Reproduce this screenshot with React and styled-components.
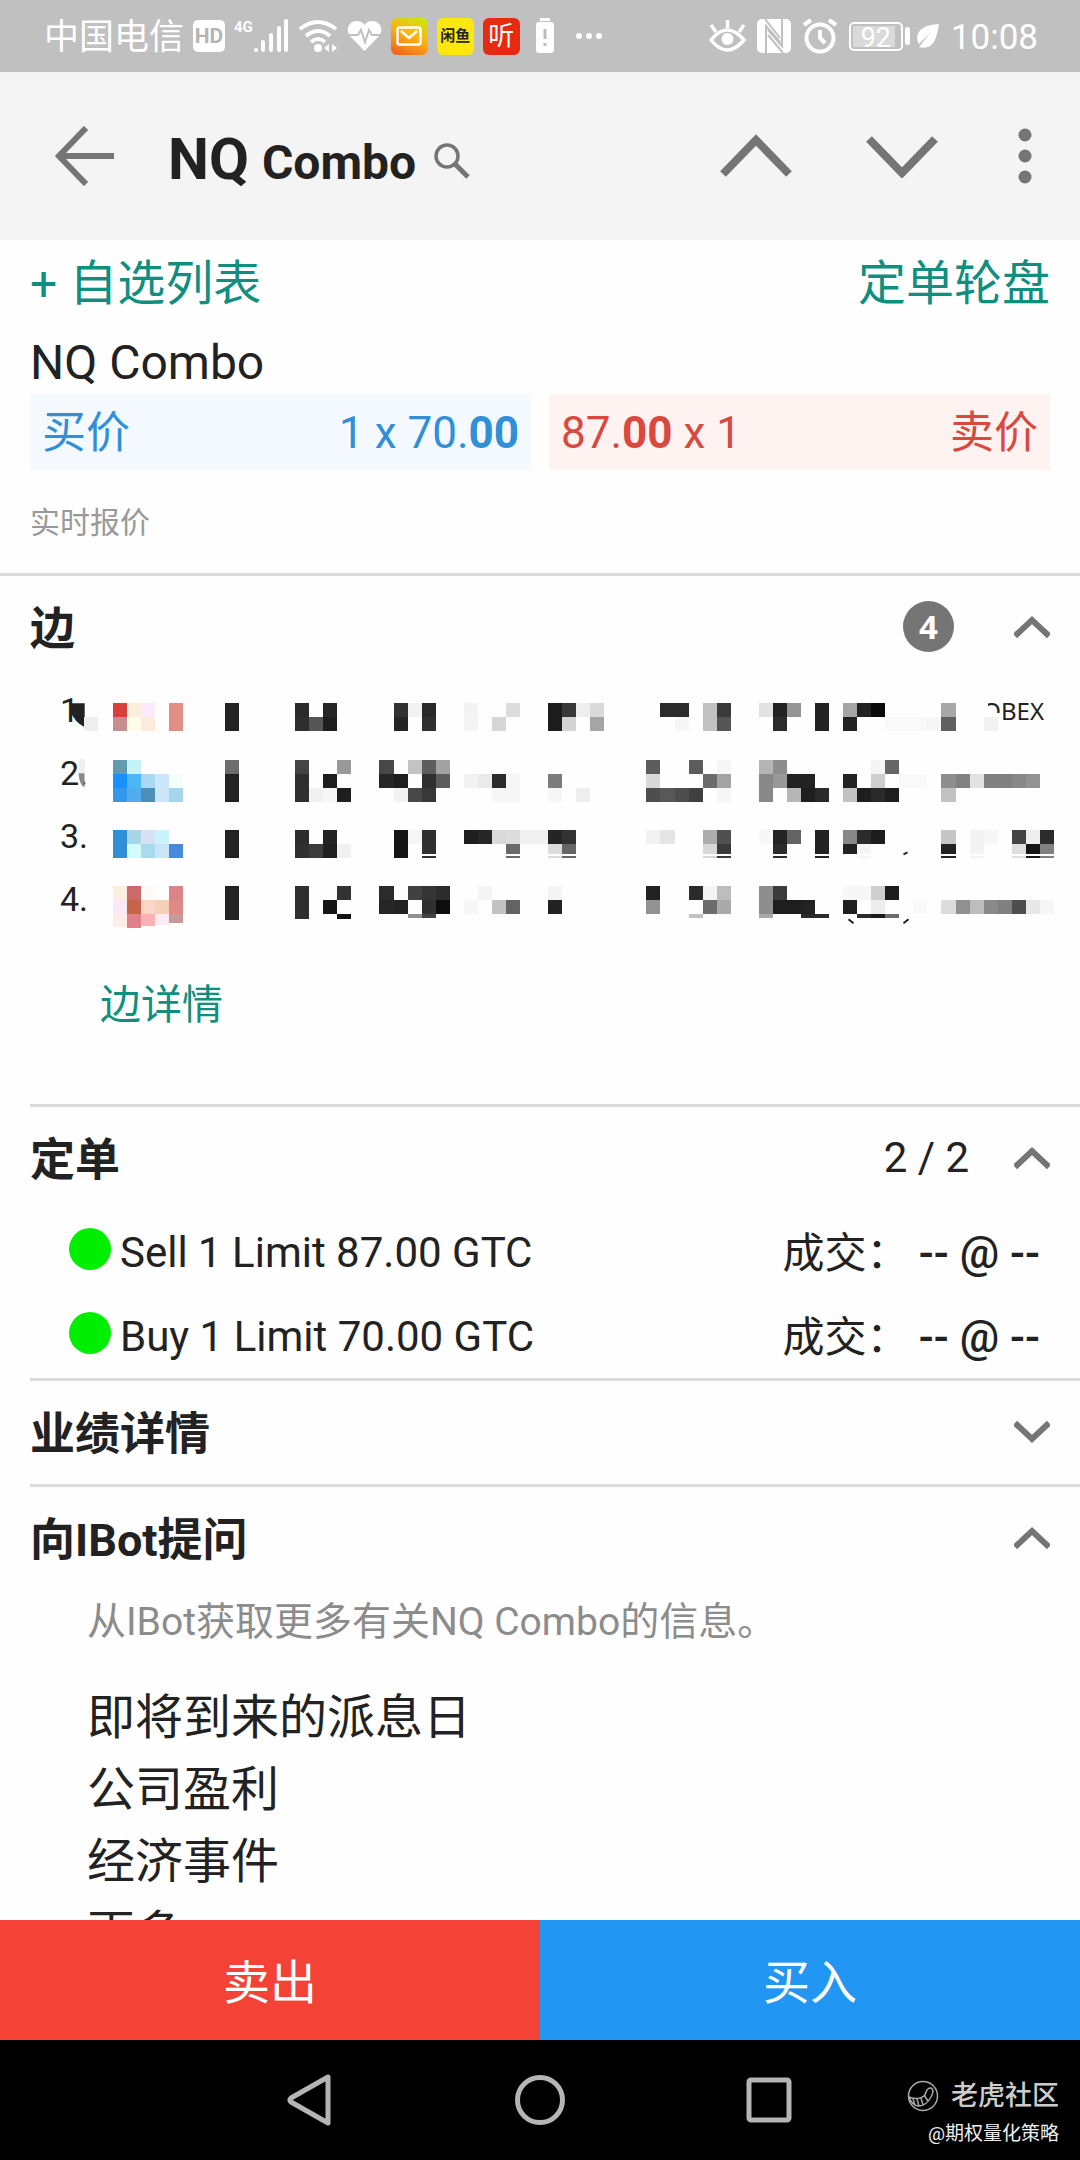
import React, { useState } from 'react';
import styled, { createGlobalStyle } from 'styled-components';

const GlobalStyle = createGlobalStyle`
  * {
    box-sizing: border-box;
  }

  body {
    margin: 0;
    background: #fefefe;
    color: #222;
    font-family: Roboto, 'Noto Sans CJK SC', sans-serif;
  }

  button {
    border: 0;
    padding: 0;
    background: none;
    color: inherit;
    font: inherit;
    cursor: pointer;
  }

  svg {
    display: block;
    flex: none;
  }
`;

const Screen = styled.div`
  display: flex;
  flex-direction: column;
  height: 100vh;
`;

const StatusBar = styled.header`
  display: flex;
  justify-content: space-between;
  align-items: center;
  height: 72px;
  flex: none;
  padding: 0 42px 0 44px;
  background: #c0c0c0;
  color: #fff;
`;

const StatusGroup = styled.div`
  display: flex;
  align-items: center;
  gap: ${({ $gap }) => $gap}px;
`;

const StatusText = styled.span`
  padding-top: 4px;
  font-size: 35px;
  line-height: 40px;
`;

const HdBadge = styled.span`
  width: 32px;
  border-radius: 5px;
  background: #fff;
  color: #b4b4b4;
  font-size: 21px;
  font-weight: bold;
  line-height: 32px;
  text-align: center;
`;

const Signal = styled.span`
  display: flex;
  align-items: flex-start;
  font-size: 15px;
  font-weight: bold;
  line-height: 16px;
`;

const AppBadge = styled.span`
  display: flex;
  align-items: center;
  justify-content: center;
  width: 37px;
  height: 37px;
  border-radius: 6px;
  background: ${({ $bg }) => $bg};
  color: ${({ $color }) => $color};
  font-size: ${({ $size }) => $size}px;
  font-weight: ${({ $weight }) => $weight || 'normal'};
  line-height: 37px;
`;

const Battery = styled.span`
  display: flex;
  align-items: center;
  gap: 2px;

  &::after {
    content: '';
    width: 5px;
    height: 18px;
    border-radius: 3px;
    background: #fff;
  }
`;

const BatteryLevel = styled.span`
  width: 54px;
  height: 29px;
  border: 2px solid #fff;
  border-radius: 5px;
  background: linear-gradient(#dadada, #dadada) 2px 2px / 42px 21px no-repeat;
  font-size: 27px;
  line-height: 28px;
  text-align: center;
`;

const AppBar = styled.div`
  display: flex;
  align-items: center;
  height: 168px;
  flex: none;
  padding: 0 42px 0 54px;
  background: #f4f4f4;
  color: #757575;
`;

const Title = styled.h1`
  display: flex;
  align-items: baseline;
  gap: 13px;
  flex: 1;
  margin: 0 0 0 54px;
  padding-top: 10px;
  color: #222;
  font-size: 58px;
  line-height: 72px;
`;

const TitleSmall = styled.span`
  font-size: 48px;
`;

const SearchIcon = styled.svg`
  margin-left: 4px;
`;

const BarActions = styled.div`
  display: flex;
  align-items: center;
  gap: 74px;
`;

const Content = styled.main`
  flex: 1;
  min-height: 0;
  overflow-y: auto;
  scrollbar-width: none;
`;

const Quote = styled.section`
  padding: 12px 30px 32px;
  border-bottom: 3px solid #dcdcdc;
`;

const LinkRow = styled.div`
  display: flex;
  justify-content: space-between;
`;

const GreenLink = styled.a`
  color: #108e7e;
  font-size: ${({ $size }) => $size || 48}px;
  line-height: 64px;
  text-decoration: none;
`;

const Symbol = styled.div`
  margin-top: 16px;
  font-size: 48px;
  line-height: 62px;
`;

const Prices = styled.div`
  display: grid;
  grid-template-columns: 1fr 1fr;
  gap: 18px;
`;

const PriceBox = styled.div`
  display: flex;
  justify-content: space-between;
  padding: 2px 12px 0;
  background: ${({ $side }) => ($side === 'bid' ? '#f4f9fe' : '#fff3f2')};
  color: ${({ $side }) => ($side === 'bid' ? '#2f8fd8' : '#d9493f')};
  font-size: 44px;
  line-height: 74px;
`;

const QuoteNote = styled.p`
  margin: 35px 0 0;
  color: #999;
  font-size: 30px;
  line-height: 36px;
`;

const Section = styled.section`
  margin-left: ${({ $flush }) => ($flush ? 0 : 30)}px;
  padding-left: ${({ $flush }) => ($flush ? 30 : 0)}px;
  border-top: ${({ $flush }) => ($flush ? 0 : 3)}px solid #dcdcdc;
`;

const SectionHead = styled.button`
  display: flex;
  align-items: center;
  width: 100%;
  height: 103px;
  padding: 0 30px 2px 0;
  text-align: left;
`;

const SectionTitle = styled.span`
  flex: 1;
  padding-top: 6px;
  font-size: 45px;
  font-weight: bold;
  line-height: 60px;
`;

const Count = styled.span`
  margin-right: 45px;
  font-size: 42px;
`;

const CountBadge = styled.span`
  width: 51px;
  margin-right: 60px;
  border-radius: 50%;
  background: #757575;
  color: #fff;
  font-family: 'Noto Sans', sans-serif;
  font-size: 33px;
  font-weight: bold;
  line-height: 51px;
  text-align: center;
`;

const LegList = styled.ol`
  position: relative;
  margin: 0 0 0 -30px;
  padding: 0 36px 0 60px;
  list-style: none;
`;

const Leg = styled.li`
  display: flex;
  justify-content: space-between;
  font-size: 34px;
  line-height: 63px;
`;

const Exchange = styled.span`
  font-family: 'Noto Sans', sans-serif;
  font-size: 24px;
`;

const Mosaic = styled.svg`
  position: absolute;
  left: 0;
  top: 0;
  width: 100%;
  height: 100%;
`;

const LegFooter = styled.div`
  padding: 42px 0 67px 70px;
`;

const OrderRow = styled.div`
  display: flex;
  align-items: center;
  height: 84px;
  padding: 2px 40px 0 39px;
  font-size: 42px;
  line-height: 50px;
`;

const StatusDot = styled.span`
  width: 42px;
  height: 42px;
  margin: 0 9px 8px 0;
  border-radius: 50%;
  background: #00ef00;
`;

const OrderText = styled.span`
  flex: 1;
`;

const Fill = styled.b`
  font-size: 44px;
  font-weight: 500;
`;

const BotBody = styled.div`
  padding-left: 57px;
`;

const BotHint = styled.p`
  margin: 0 0 30px;
  padding-top: 2px;
  color: #8c8c8c;
  font-size: 39px;
  line-height: 60px;
`;

const BotQuestion = styled.button`
  display: block;
  font-size: 48px;
  line-height: 72px;
`;

const TradeBar = styled.div`
  display: grid;
  grid-template-columns: 1fr 1fr;
  flex: none;
`;

const TradeButton = styled.button`
  height: 120px;
  padding-bottom: 4px;
  background: ${({ $side }) => ($side === 'sell' ? '#f44336' : '#2196f3')};
  color: #fff;
  font-size: 47px;
`;

const NavBar = styled.nav`
  position: relative;
  display: flex;
  justify-content: center;
  align-items: center;
  gap: 180px;
  height: 120px;
  flex: none;
  background: #000;
`;

const NavButton = styled.button`
  width: 50px;
`;

const Watermark = styled.div`
  position: absolute;
  right: 21px;
  bottom: 12px;
  display: flex;
  flex-direction: column;
  align-items: flex-end;
  color: #eee;
  font-size: 19px;
  line-height: 28px;
`;

const Community = styled.div`
  display: flex;
  align-items: center;
  gap: 12px;
  color: #ccc;
  font-size: 27px;
  font-weight: 500;
  line-height: 48px;
`;

// censored cells of the leg list: grid row -> [column, shade, height]
const CELL = 14.05;
const CELLS = {
  0: [[0, 'd9403d'], [1, 'fdeedb'], [2, 'fbebfa'], [4, 'e08e86'], [8, '222'], [13, '2a2a2a'], [15, '262626'], [20, '323232'], [21, 'f2f2f2'], [22, '292929'], [25, 'f3f3f3'], [28, 'dcdcdc'], [31, '1c1c1c'], [32, '383838'], [33, 'eee'], [34, 'dadada'], [39, '2b2b2b'], [40, '2b2b2b'], [42, 'c2c2c2'], [43, '3a3a3a'], [46, 'e2e2e2'], [47, '222'], [48, '949494'], [50, '232323'], [52, 'a5a5a5'], [53, '222'], [54, '0a0a0a'], [59, 'a8a8a8']],
  1: [[-2, 'eee'], [0, 'c68e8e'], [1, 'fffce8'], [2, 'fcebd9'], [4, 'e08e86'], [8, '222'], [13, '2e2e2e'], [14, '555'], [15, '1e1e1e'], [20, '252525'], [22, '303030'], [25, 'f4f4f4'], [27, 'd6d6d6'], [31, '1c1c1c'], [32, 'd3d3d3'], [34, 'a5a5a5'], [40, 'f6f6f6'], [42, 'c2c2c2'], [43, '555'], [47, '2c2c2c'], [50, '232323'], [52, '222'], [55, 'f9f9f9'], [56, 'f9f9f9'], [57, 'f9f9f9'], [58, 'f6f6f6'], [59, '606060'], [62, 'f2f2f2']],
  4: [[0, '5f9cad'], [1, 'c4f3fa'], [8, '6d6d6d'], [13, '454545'], [16, '999'], [19, '484848'], [21, 'c3c3c3'], [22, '5d5d5d'], [23, 'a2a2a2'], [38, '5c5c5c'], [41, '5c5c5c'], [43, 'f7f7f7'], [46, 'b5b5b5'], [47, '8e8e8e'], [54, 'f4f4f4'], [55, '666']],
  5: [[0, '1890ff'], [1, '4bb8f3'], [2, 'a9d8f2'], [3, 'c9e6fa'], [4, 'f3feff'], [8, '222'], [13, '2f2f2f'], [15, '1e1e1e'], [19, '262626'], [20, '1e1e1e'], [22, '2f2f2f'], [23, '5c5c5c'], [25, 'f2f2f2'], [26, 'eaeaea'], [27, '2b2b2b'], [28, 'f6f6f6'], [31, '7c7c7c'], [38, 'd9d9d9'], [42, '6b6b6b'], [43, 'a3a3a3'], [46, '888'], [47, '999'], [48, '222'], [49, '222'], [52, '222'], [54, 'cecece'], [56, 'f9f9f9'], [57, 'f9f9f9'], [59, '8e8e8e'], [60, '828282'], [61, 'e2e2e2'], [62, '808080'], [63, '808080'], [64, '888'], [65, '929292']],
  6: [[0, '3299ea'], [1, '50aef0'], [2, '4c90b8'], [3, 'cbe6f7'], [4, 'a4d7ee'], [8, '222'], [13, '2f2f2f'], [14, 'f1f1f1'], [15, 'f6f6f6'], [16, '1e1e1e'], [20, 'f2f2f2'], [21, '484848'], [22, '383838'], [27, 'f6f6f6'], [28, 'f6f6f6'], [31, 'f6f6f6'], [33, 'eee'], [38, '4e4e4e'], [39, '585858'], [40, '4d4d4d'], [41, '404040'], [43, 'f6f6f6'], [46, '888'], [48, 'b7b7b7'], [49, '1e1e1e'], [50, '2a2a2a'], [52, 'c2c2c2'], [53, '1e1e1e'], [54, '2a2a2a'], [55, '1e1e1e'], [59, 'c2c2c2']],
  9: [[0, '318fd6'], [1, 'a8d6e6'], [2, 'd5e2f2'], [3, 'c9f4fb'], [8, '222'], [13, '2c2c2c'], [15, '222'], [20, '151515'], [21, 'f6f6f6'], [22, '303030'], [25, '1e1e1e'], [26, '262626'], [27, 'dadada'], [28, 'dcdcdc'], [29, 'f0f0f0'], [30, 'f0f0f0'], [31, '252525'], [32, '333'], [38, 'f2f2f2'], [39, 'e5e5e5'], [42, 'adadad'], [43, '505050'], [46, 'f7f7f7'], [47, '242424'], [48, '636363'], [50, '222'], [52, '888'], [53, '2c2c2c'], [54, '1c1c1c'], [59, 'c6c6c6'], [61, 'f3f3f3'], [62, 'f7f7f7'], [64, '444'], [65, 'eee'], [66, '2c2c2c']],
  10: [[0, '318fd6'], [1, 'd5fafd'], [2, 'a8dcec'], [3, 'cbe5f8'], [4, '4789dc'], [8, '222'], [13, '303030'], [14, '3c3c3c'], [15, '1f1f1f'], [16, 'f1f1f1'], [20, '151515'], [22, '303030'], [28, '6a6a6a'], [31, 'dcdcdc'], [32, '666'], [42, 'd8d8d8'], [43, '3a3a3a'], [47, '2c2c2c'], [50, '222'], [52, '222', 10], [53, 'f6f6f6'], [59, '222'], [61, 'f3f3f3'], [64, 'dedede'], [65, '161616'], [66, '808080']],
  13: [[0, 'fdeee0'], [1, 'ca6b68'], [2, 'fffaf5'], [4, 'de8488'], [8, '222'], [13, '2f2f2f'], [16, '333'], [19, '2b2b2b'], [21, '414141'], [22, '353535'], [23, '2b2b2b'], [26, 'f4f4f4'], [31, 'f4f4f4'], [38, '222'], [41, '2b2b2b'], [42, 'f4f4f4'], [43, 'bdbdbd'], [46, '8e8e8e'], [47, '3b3b3b'], [52, 'f7f7f7'], [53, 'f7f7f7'], [54, 'cecece'], [55, '1c1c1c']],
  14: [[0, 'fbe8f6'], [1, 'c66548'], [2, 'fbd6c6'], [3, 'f5d0b8'], [4, 'e08a88'], [8, '222'], [13, '2f2f2f'], [15, '161616'], [19, '262626'], [20, '222'], [22, '303030'], [23, '0e0e0e'], [25, 'f7f7f7'], [27, 'c2c2c2'], [28, '636363'], [31, '222'], [38, '929292'], [42, '6c6c6c'], [43, 'aaa'], [46, '8e8e8e'], [47, '1e1e1e'], [48, '1e1e1e'], [49, '222'], [52, '1e1e1e'], [54, 'ededed'], [57, 'f9f9f9'], [59, 'dcdcdc'], [60, '909090'], [61, 'bdbdbd'], [62, '8a8a8a'], [63, '808080'], [64, '4e4e4e'], [65, 'e8e8e8'], [66, 'f6f6f6']],
  15: [[0, 'fdecea', 13], [1, 'e0808a', 14], [2, 'fab0b4', 12], [3, 'fdeaf2', 11], [4, 'c69a98', 9], [8, '222', 6], [13, '2f2f2f', 5], [16, '111', 5], [21, '909090', 4], [22, '444', 4], [41, 'c2c2c2', 4], [46, 'a8a8a8', 4], [49, '2b2b2b', 4], [50, '2b2b2b', 4], [53, '2b2b2b', 4], [54, '1a1a1a', 4], [55, '6c6c6c', 4]],
};

const legs = [{ exchange: 'OBEX' }, {}, {}, {}];

const orders = ['Sell 1 Limit 87.00 GTC', 'Buy 1 Limit 70.00 GTC'];

const questions = ['即将到来的派息日', '公司盈利', '经济事件', '更多'];

const Chevron = ({ open }) => (
  <svg width="36" height="24" viewBox="0 0 36 24" fill="none" stroke="#757575" strokeWidth="6">
    <path d={open ? 'M1 21 18 5 35 21' : 'M1 3 18 19 35 3'} />
  </svg>
);

const LegMosaic = () => (
  <Mosaic aria-hidden="true" shapeRendering="crispEdges">
    <g transform="translate(112.5 24.3)">
      <path d="M-42.2 0h14.4v24q-10-5-14.4-16z" fill="#222" shapeRendering="auto" />
      <path d="M-34 56h6v14h-6z" fill="#eee" />
      <path d="M-34 70h6v14q-5-2-6-14z" fill="#888" shapeRendering="auto" />
      <path d="M866-6h9v30h-9zM872 10h15v13h-15z" fill="#fefefe" />
      {Object.entries(CELLS).map(([row, cells]) =>
        cells.map(([col, shade, height]) => (
          <rect
            key={`${row}-${col}`}
            x={col * CELL}
            y={row * CELL}
            width={CELL}
            height={height || CELL}
            fill={`#${shade}`}
          />
        ))
      )}
      <path d="M306 151.500H945" stroke="#fefefe" strokeWidth="2" />
      <path d="M736 216l5 4M796 216l-5 4M791 151l4-2" stroke="#222" strokeWidth="2" shapeRendering="auto" />
    </g>
  </Mosaic>
);

const Panel = ({ title, aside, flush, defaultOpen, children }) => {
  const [open, setOpen] = useState(defaultOpen);
  return (
    <Section $flush={flush}>
      <SectionHead onClick={() => setOpen(!open)} aria-expanded={open}>
        <SectionTitle>{title}</SectionTitle>
        {aside}
        <Chevron open={open} />
      </SectionHead>
      {open && children}
    </Section>
  );
};

const Status = () => (
  <StatusBar>
    <StatusGroup $gap={9}>
      <StatusText>中国电信</StatusText>
      <HdBadge>HD</HdBadge>
      <Signal>
        4G
        <svg width="36" height="34" viewBox="0 0 36 34" fill="none" stroke="#fff" strokeWidth="4" strokeLinecap="round">
          <path d="M3 31v0M10 31v-8M18 31V16M26 31V9M33 31V2" />
        </svg>
      </Signal>
      <svg width="40" height="34" viewBox="0 0 40 34" fill="none" stroke="#fff" strokeWidth="4">
        <path d="M2 10Q20-4 38 10M8 17q12-10 24 0M13 23q7-6 14 0" />
        <circle cx="20" cy="29" r="4" fill="#fff" stroke="none" />
        <path d="m26 29 5-4v8zM39 29l-5-4v8z" fill="#fff" stroke="none" />
      </svg>
      <svg width="35" height="32" viewBox="0 0 35 32">
        <path d="M17.500 31 3 16C-3 8 4 0 10 1q5 0 7.500 4Q20 1 25 1c6-1 13 7 7 15z" fill="#fff" />
        <path d="M0 15h11l3-5 4 12 4-12 3 5h10" fill="none" stroke="#c0c0c0" strokeWidth="2" />
      </svg>
      <AppBadge $bg="linear-gradient(25deg, #f4571c, #fcae11 50%, #c7ee12)">
        <svg width="26" height="20" viewBox="0 0 26 20" fill="none" stroke="#fff" strokeWidth="2.500" strokeLinejoin="round">
          <rect x="1.500" y="1.500" width="23" height="17" rx="2" />
          <path d="m5 5 8 7 8-7" />
        </svg>
      </AppBadge>
      <AppBadge $bg="#fde70c" $color="#222" $size={15} $weight="bold">闲鱼</AppBadge>
      <AppBadge $bg="#e72a12" $color="#fff" $size={26}>听</AppBadge>
      <svg width="33" height="36" viewBox="2 0 33 36">
        <path d="M13 0h10v3H13zM9 7q0-3 3-3h12q3 0 3 3v25q0 3-3 3H12q-3 0-3-3z" fill="#fff" />
        <path d="M18 11v10M18 25v3" stroke="#bbb" strokeWidth="3" />
      </svg>
      <svg width="32" height="8" viewBox="0 0 32 8" fill="#fff">
        <circle cx="8" cy="4" r="3" />
        <circle cx="18" cy="4" r="3" />
        <circle cx="28" cy="4" r="3" />
      </svg>
    </StatusGroup>
    <StatusGroup $gap={11}>
      <svg width="37" height="34" viewBox="0 0 37 34" fill="none" stroke="#fff" strokeWidth="3.500">
        <path d="M2 21q16-20 33 0-17 20-33 0zM18.500 9V1M7 13 2 6M30 13l5-7" />
        <circle cx="18.500" cy="20" r="6" fill="#fff" stroke="none" />
      </svg>
      <svg width="34" height="34" viewBox="0 0 34 34">
        <rect width="34" height="34" rx="5" fill="#fff" />
        <path d="M9 34V7l14 16M25 0v27L11 11M8 0l15 19M11 16l15 18" fill="none" stroke="#c0c0c0" strokeWidth="2" />
      </svg>
      <svg width="36" height="36" viewBox="0 0 36 36" fill="none" stroke="#fff" strokeWidth="4">
        <circle cx="18" cy="20" r="13.500" />
        <path d="M18 12v8l5 5M2 7l7-5M34 7l-7-5" />
      </svg>
      <StatusGroup $gap={6}>
        <Battery>
          <BatteryLevel>92</BatteryLevel>
        </Battery>
        <svg width="24" height="26" viewBox="0 0 24 26">
          <path d="M23 1Q3 2 1 14q0 4 2 7l12-12L3 24q11 3 16-7 3-8 4-16z" fill="#fff" />
        </svg>
      </StatusGroup>
      <StatusText>10:08</StatusText>
    </StatusGroup>
  </StatusBar>
);

const Header = () => (
  <AppBar>
    <button aria-label="返回">
      <svg width="60" height="60" viewBox="0 0 60 60" fill="none" stroke="currentColor" strokeWidth="6">
        <path d="M60 30H5M32 2 5 30l27 28" />
      </svg>
    </button>
    <Title>
      NQ
      <TitleSmall>Combo</TitleSmall>
      <SearchIcon width="37" height="36" viewBox="0 0 37 36" fill="none" stroke="#757575" strokeWidth="3.500">
        <circle cx="14" cy="13" r="11" />
        <path d="m22 21 13 13" strokeWidth="5" />
      </SearchIcon>
    </Title>
    <BarActions>
      <button aria-label="上一个">
        <svg width="72" height="44" viewBox="0 0 72 44" fill="none" stroke="currentColor" strokeWidth="8">
          <path d="M3 40 36 6l33 34" />
        </svg>
      </button>
      <button aria-label="下一个">
        <svg width="72" height="44" viewBox="0 0 72 44" fill="none" stroke="currentColor" strokeWidth="8">
          <path d="m3 5 33 34L69 5" />
        </svg>
      </button>
      <button aria-label="更多选项">
        <svg width="26" height="56" viewBox="0 0 26 56" fill="currentColor">
          <circle cx="13" cy="7" r="6.500" />
          <circle cx="13" cy="28" r="6.500" />
          <circle cx="13" cy="49" r="6.500" />
        </svg>
      </button>
    </BarActions>
  </AppBar>
);

const App = () => {
  return (
    <Screen>
      <GlobalStyle />
      <Status />
      <Header />
      <Content>
        <Quote>
          <LinkRow>
            <GreenLink href="#watchlist">+ 自选列表</GreenLink>
            <GreenLink href="#wheel">定单轮盘</GreenLink>
          </LinkRow>
          <Symbol>NQ Combo</Symbol>
          <Prices>
            <PriceBox $side="bid">
              <span>买价</span>
              <span>1 x 70.<b>00</b></span>
            </PriceBox>
            <PriceBox $side="ask">
              <span>87.<b>00</b> x 1</span>
              <span>卖价</span>
            </PriceBox>
          </Prices>
          <QuoteNote>实时报价</QuoteNote>
        </Quote>

        <Panel title="边" aside={<CountBadge>4</CountBadge>} flush defaultOpen>
          <LegList>
            {legs.map((leg, i) => (
              <Leg key={i}>
                {i + 1}.
                {leg.exchange && <Exchange>{leg.exchange}</Exchange>}
              </Leg>
            ))}
            <LegMosaic />
          </LegList>
          <LegFooter>
            <GreenLink href="#legs" $size={41}>边详情</GreenLink>
          </LegFooter>
        </Panel>

        <Panel title="定单" aside={<Count>2 / 2</Count>} defaultOpen>
          {orders.map(order => (
            <OrderRow key={order}>
              <StatusDot />
              <OrderText>{order}</OrderText>
              <span>成交： <Fill>-- @ --</Fill></span>
            </OrderRow>
          ))}
        </Panel>

        <Panel title="业绩详情" defaultOpen={false} />

        <Panel title="向IBot提问" defaultOpen>
          <BotBody>
            <BotHint>从IBot获取更多有关NQ Combo的信息。</BotHint>
            {questions.map(question => (
              <BotQuestion key={question}>{question}</BotQuestion>
            ))}
          </BotBody>
        </Panel>
      </Content>

      <TradeBar>
        <TradeButton $side="sell">卖出</TradeButton>
        <TradeButton $side="buy">买入</TradeButton>
      </TradeBar>

      <NavBar>
        <NavButton aria-label="返回">
          <svg width="50" height="54" viewBox="0 0 50 54" fill="none" stroke="#b5b5b5" strokeWidth="5" strokeLinejoin="round">
            <path d="M43 4v46L6 29q-2-2 0-4z" />
          </svg>
        </NavButton>
        <NavButton aria-label="主页">
          <svg width="50" height="50" viewBox="0 0 50 50" fill="none" stroke="#b5b5b5" strokeWidth="5">
            <circle cx="25" cy="25" r="22.500" />
          </svg>
        </NavButton>
        <NavButton aria-label="最近任务">
          <svg width="50" height="50" viewBox="0 0 50 50" fill="none" stroke="#b5b5b5" strokeWidth="5">
            <rect x="4" y="5" width="40" height="40" rx="2" />
          </svg>
        </NavButton>
        <Watermark>
          <Community>
            <svg width="32" height="32" viewBox="0 0 32 32" fill="none" stroke="#aaa" strokeWidth="1.500">
              <circle cx="16" cy="16" r="14.500" />
              <path d="M2 17q10 4 16-2 2-8 6-7 4 2 0 9-5 9-12 9-7 0-10-9zM6 19l2 6M10 19l2 7M14 18l2 7M17 15l4 6" />
            </svg>
            老虎社区
          </Community>
          @期权量化策略
        </Watermark>
      </NavBar>
    </Screen>
  );
};

export default App;
